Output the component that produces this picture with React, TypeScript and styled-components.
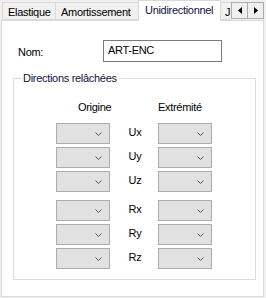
import React from "react";
import styled, { createGlobalStyle } from "styled-components";

const Global = createGlobalStyle`
  body {
    margin: 0;
    background: #f0f0f0;
    font-family: "Liberation Sans", Arial, sans-serif;
    font-size: 11px;
    letter-spacing: -0.3px;
    color: #000;
  }
`;

const rows = [
  { label: "Ux", extra: 0 },
  { label: "Uy", extra: 0 },
  { label: "Uz", extra: 0 },
  { label: "Rx", extra: 5 },
  { label: "Ry", extra: 0 },
  { label: "Rz", extra: 0 },
];

const Chevron = () => (
  <svg width="7" height="4" viewBox="0 0 7 4">
    <path d="M0.5 0.5 L3.5 3.5 L6.5 0.5" fill="none" stroke="#555" strokeWidth="1" />
  </svg>
);

const Combo = () => (
  <Select>
    <Chevron />
  </Select>
);

const App = () => {
  return (
    <Window>
      <Global />
      <TabStrip>
        <Tabs>
          <Tab $w={54}>Elastique</Tab>
          <Tab $w={83}>Amortissement</Tab>
          <Tab $w={83} $active>
            Unidirectionnel
          </Tab>
          <Tab $w={30}>J</Tab>
        </Tabs>
        <ScrollBtn>
          <svg width="4" height="7" viewBox="0 0 4 7">
            <path d="M4 0 L0 3.5 L4 7 Z" fill="#000" />
          </svg>
        </ScrollBtn>
        <ScrollBtn>
          <svg width="4" height="7" viewBox="0 0 4 7">
            <path d="M0 0 L4 3.5 L0 7 Z" fill="#000" />
          </svg>
        </ScrollBtn>
      </TabStrip>
      <Panel>
        <NameRow>
          <NameLabel>Nom:</NameLabel>
          <TextBox>ART-ENC</TextBox>
        </NameRow>
        <Group>
          <Legend>Directions relâchées</Legend>
          <Header>
            <HeadCell $pad={22}>Origine</HeadCell>
            <span />
            <HeadCell $pad={0}>Extrémité</HeadCell>
          </Header>
          {rows.map((r) => (
            <Row key={r.label} $extra={r.extra}>
              <Combo />
              <AxisLabel>{r.label}</AxisLabel>
              <Combo />
            </Row>
          ))}
        </Group>
      </Panel>
    </Window>
  );
};

export default App;

const Window = styled.div`
  width: 266px;
  height: 298px;
  overflow: hidden;
`;

const TabStrip = styled.div`
  display: flex;
  align-items: flex-start;
  height: 20px;
  padding-left: 2px;
  position: relative;
  z-index: 1;
`;

const Tabs = styled.div`
  display: flex;
  align-items: flex-end;
  height: 21px;
  width: 229px;
  overflow: hidden;
`;

const Tab = styled.div<{ $w: number; $active?: boolean }>`
  box-sizing: border-box;
  flex: none;
  width: ${(p) => p.$w}px;
  height: ${(p) => (p.$active ? 21 : 18)}px;
  margin-left: ${(p) => (p.$active ? -1 : 0)}px;
  margin-right: ${(p) => (p.$active ? -1 : 0)}px;
  position: relative;
  z-index: ${(p) => (p.$active ? 2 : 1)};
  margin-bottom: ${(p) => (p.$active ? 0 : 1)}px;
  background: ${(p) => (p.$active ? "#fff" : "#f0f0f0")};
  border: 1px solid #d9d9d9;
  border-bottom: ${(p) => (p.$active ? "none" : "1px solid #d9d9d9")};
  border-left: ${(p) => (p.$active ? "1px solid #d9d9d9" : "none")};
  padding: ${(p) => (p.$active ? "3px 0 0 6px" : "3px 0 0 5px")};
  white-space: nowrap;
  line-height: 13px;
  color: ${(p) => (p.$active ? "#101040" : "#000")};
  &:first-child {
    border-left: 1px solid #d9d9d9;
  }
`;

const ScrollBtn = styled.div`
  box-sizing: border-box;
  width: 17px;
  height: 17px;
  margin-top: 2px;
  background: #f0f0f0;
  border: 1px solid #adadad;
  display: flex;
  align-items: center;
  justify-content: center;
  & + & {
    margin-left: -1px;
  }
`;

const Panel = styled.div`
  box-sizing: border-box;
  width: 263px;
  height: 277px;
  margin-left: 1px;
  background: #fff;
  border: 1px solid #d9d9d9;
  padding-top: 19px;
`;

const NameRow = styled.div`
  display: flex;
  align-items: center;
  height: 22px;
  padding-left: 16px;
`;

const NameLabel = styled.div`
  width: 85px;
  padding-top: 1px;
`;

const TextBox = styled.div`
  box-sizing: border-box;
  width: 119px;
  height: 22px;
  border: 1px solid #7a7a7a;
  padding: 3px 0 0 4px;
  line-height: 13px;
`;

const Group = styled.fieldset`
  box-sizing: border-box;
  width: 243px;
  height: 208px;
  margin: 10px 0 0 11px;
  padding: 0 0 0 42px;
  border: 1px solid #dcdcdc;
  min-width: 0;
`;

const Legend = styled.legend`
  padding: 0 2px;
  margin-left: -35px;
  line-height: 13px;
  color: #101040;
`;

const Grid = styled.div`
  display: grid;
  grid-template-columns: 54px 48px 54px;
  align-items: center;
`;

const Header = styled(Grid)`
  margin-top: 16px;
  height: 13px;
  line-height: 13px;
`;

const HeadCell = styled.div<{ $pad: number }>`
  padding-left: ${(p) => p.$pad}px;
  white-space: nowrap;
`;

const Row = styled(Grid)<{ $extra: number }>`
  height: 21px;
  margin-top: ${(p) => 3 + p.$extra}px;
  &:nth-of-type(2) {
    margin-top: 9px;
  }
`;

const Select = styled.div`
  box-sizing: border-box;
  height: 21px;
  background: #e1e1e1;
  border: 1px solid #adadad;
  display: flex;
  align-items: center;
  justify-content: flex-end;
  padding-right: 7px;
`;

const AxisLabel = styled.div`
  text-align: center;
  padding-left: 2px;
  margin-top: -3px;
`;
